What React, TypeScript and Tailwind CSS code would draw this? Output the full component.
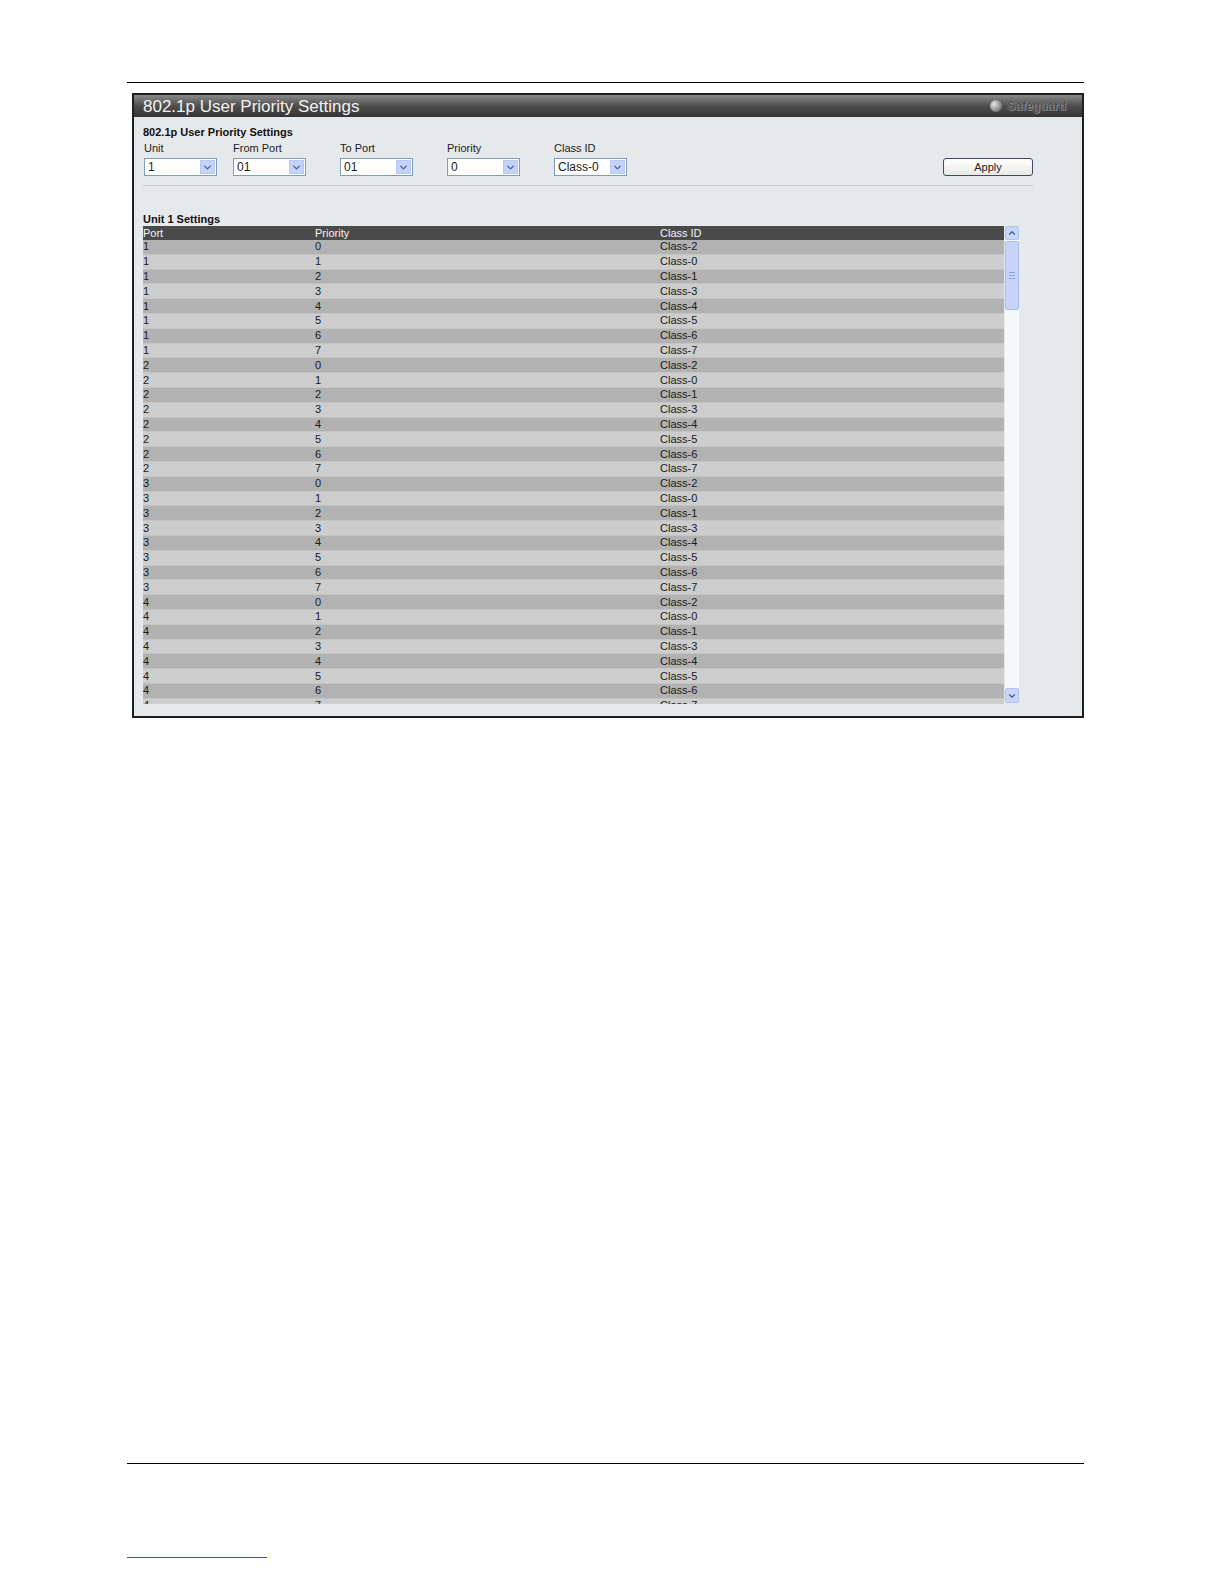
import { ChevronDown, ChevronUp } from "lucide-react";

const classFor = ["Class-2", "Class-0", "Class-1", "Class-3", "Class-4", "Class-5", "Class-6", "Class-7"];

const rows: { port: number; priority: number; cls: string }[] = [];
for (let p = 1; p <= 4; p++) {
  for (let pr = 0; pr < 8; pr++) {
    rows.push({ port: p, priority: pr, cls: classFor[pr] });
  }
}

function Select({ value, width }: { value: string; width: string }) {
  return (
    <div className={`flex items-center h-[18px] border border-[#7f9db9] bg-white ${width}`}>
      <span className="flex-1 pl-[3px] text-[12px] leading-none text-[#222]">{value}</span>
      <span className="flex items-center justify-center w-[15px] h-[14px] mr-[1px] bg-[#c3d3fd] border border-[#b7c8f4]">
        <ChevronDown size={11} strokeWidth={3} className="text-[#4d6185]" />
      </span>
    </div>
  );
}

function Field({ label, value, width }: { label: string; value: string; width: string }) {
  return (
    <div className={width}>
      <div className="text-[11px] leading-[14px] text-[#222] mb-[3px]">{label}</div>
      <Select value={value} width="w-[73px]" />
    </div>
  );
}

export default function App() {
  return (
    <div className="min-h-[1584px] bg-white font-['Liberation_Sans',Arial,sans-serif] pt-[82px]">
      {/* top rule */}
      <div className="ml-[127px] w-[957px] border-t border-black" />

      {/* panel */}
      <div className="ml-[132px] mt-[10px] w-[952px] h-[625px] border-2 border-[#1e1e1e] bg-[#e6e9eb] flex flex-col">
        <div className="h-[22px] flex items-center justify-between pl-[9px] pr-[16px] bg-gradient-to-b from-[#8a8a8a] via-[#4e4e4e] to-[#343434]">
          <span className="text-[17px] leading-none text-[#f2f2f2]">802.1p User Priority Settings</span>
          <span className="flex items-center gap-[5px]">
            <span className="w-[12px] h-[12px] rounded-full bg-[radial-gradient(circle_at_35%_35%,#e6e6e6,#8a8a8a_60%,#4a4a4a)]" />
            <span className="text-[12px] font-bold text-[#4a4a4a] [text-shadow:0_0_1px_#bdbdbd,1px_1px_0_#7a7a7a]">Safeguard</span>
          </span>
        </div>

        <div className="flex-1 pl-[9px] pt-[8px]">
          <div className="text-[11px] leading-[14px] font-bold text-[#111]">802.1p User Priority Settings</div>
          <div className="flex items-end w-[890px] pl-[1px] pt-[2px]">
            <Field label="Unit" value="1" width="w-[89px]" />
            <Field label="From Port" value="01" width="w-[107px]" />
            <Field label="To Port" value="01" width="w-[107px]" />
            <Field label="Priority" value="0" width="w-[107px]" />
            <Field label="Class ID" value="Class-0" width="w-[107px]" />
            <div className="flex-1 flex justify-end">
              <button className="w-[90px] h-[18px] rounded-[3px] border border-[#3c4a5c] bg-gradient-to-b from-white to-[#e9e9e4] text-[11px] leading-none text-[#222]">
                Apply
              </button>
            </div>
          </div>
          <div className="w-[890px] mt-[9px] border-t border-[#c9cccf]" />

          <div className="mt-[26px] text-[11px] leading-[14px] font-bold text-[#111]">Unit 1 Settings</div>

          <div className="flex h-[478px]">
            <div className="w-[861px] overflow-hidden text-[11px]">
              <div className="grid grid-cols-[172px_345px_1fr] h-[14px] items-center bg-[#4a4a4a] text-[#f4f4f4] leading-none">
                <span>Port</span>
                <span>Priority</span>
                <span>Class ID</span>
              </div>
              {rows.map((r, i) => (
                <div
                  key={i}
                  className={`grid grid-cols-[172px_345px_1fr] h-[14.8px] items-center leading-none text-[#1a1a1a] border-b border-[#c4c4c4] ${
                    i % 2 === 0 ? "bg-[#b2b2b2]" : "bg-[#cdcdcd]"
                  }`}
                >
                  <span>{r.port}</span>
                  <span>{r.priority}</span>
                  <span>{r.cls}</span>
                </div>
              ))}
            </div>

            {/* scrollbar */}
            <div className="w-[14px] ml-[1px] h-[477px] bg-[#f6f7f8] flex flex-col">
              <div className="h-[14px] flex items-center justify-center bg-[#c8d6fb] border border-[#b1c2ee] rounded-[2px]">
                <ChevronUp size={10} strokeWidth={3} className="text-[#4d6185]" />
              </div>
              <div className="mt-[1px] h-[69px] bg-[#c6d4fa] border border-[#aabced] rounded-[2px] flex flex-col items-center justify-center gap-[2px]">
                <span className="w-[6px] border-t border-[#8fa3d6]" />
                <span className="w-[6px] border-t border-[#8fa3d6]" />
                <span className="w-[6px] border-t border-[#8fa3d6]" />
              </div>
              <div className="flex-1" />
              <div className="h-[15px] flex items-center justify-center bg-[#c8d6fb] border border-[#b1c2ee] rounded-[2px]">
                <ChevronDown size={10} strokeWidth={3} className="text-[#4d6185]" />
              </div>
            </div>
          </div>
        </div>
      </div>

      {/* bottom rule */}
      <div className="ml-[127px] mt-[745px] w-[957px] border-t border-black" />
      <div className="ml-[127px] mt-[93px] w-[140px] border-t border-[#3b4bc8]" />
    </div>
  );
}
